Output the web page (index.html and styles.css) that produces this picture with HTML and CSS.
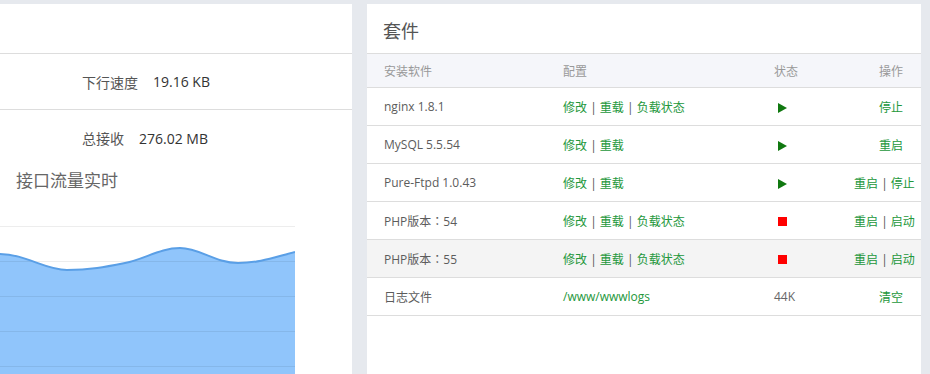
FILE: index.html
```html
<!DOCTYPE html>
<html lang="zh-CN">
<head>
<meta charset="utf-8">
<title>套件</title>
<link rel="stylesheet" href="styles.css">
</head>
<body>
<div class="page">
  <section class="panel panel-left">
    <div class="panel-head"></div>
    <div class="stat stat-first"><span class="stat-label">下行速度</span><span class="stat-value">19.16 KB</span></div>
    <div class="stat stat-second"><span class="stat-label">总接收</span><span class="stat-value">276.02 MB</span></div>
    <h3 class="chart-title">接口流量实时</h3>
    <svg class="chart" width="295" height="180" viewBox="0 0 295 180">
      <path class="area" d="M0,58 C25,58 45,74 67,74 C90,74 105,71 125,67 C145,63 160,52 180,52 C200,52 215,67 238,67 C260,67 275,61 295,56 L295,180 L0,180 Z"/>
      <g class="grid">
        <line x1="0" y1="30.5" x2="295" y2="30.5"/>
        <line x1="0" y1="65.5" x2="295" y2="65.5"/>
        <line x1="0" y1="100.5" x2="295" y2="100.5"/>
        <line x1="0" y1="135.5" x2="295" y2="135.5"/>
        <line x1="0" y1="170.5" x2="295" y2="170.5"/>
      </g>
      <path class="line" d="M0,58 C25,58 45,74 67,74 C90,74 105,71 125,67 C145,63 160,52 180,52 C200,52 215,67 238,67 C260,67 275,61 295,56"/>
    </svg>
  </section>
  <section class="panel panel-right">
    <div class="panel-head"><h2 class="panel-title">套件</h2></div>
    <table class="soft">
      <colgroup><col class="c1"><col class="c2"><col class="c3"><col class="c4"></colgroup>
      <thead>
        <tr><th>安装软件</th><th>配置</th><th>状态</th><th class="r">操作</th></tr>
      </thead>
      <tbody>
        <tr><td>nginx 1.8.1</td><td><a>修改</a> | <a>重载</a> | <a>负载状态</a></td><td><span class="run"></span></td><td class="r"><a>停止</a></td></tr>
        <tr><td>MySQL 5.5.54</td><td><a>修改</a> | <a>重载</a></td><td><span class="run"></span></td><td class="r"><a>重启</a></td></tr>
        <tr><td>Pure-Ftpd 1.0.43</td><td><a>修改</a> | <a>重载</a></td><td><span class="run"></span></td><td class="r"><a>重启</a> | <a>停止</a></td></tr>
        <tr><td>PHP版本<span class="colon" lang="zh-TW">：</span>54</td><td><a>修改</a> | <a>重载</a> | <a>负载状态</a></td><td><span class="stop"></span></td><td class="r"><a>重启</a> | <a>启动</a></td></tr>
        <tr class="hover"><td>PHP版本<span class="colon" lang="zh-TW">：</span>55</td><td><a>修改</a> | <a>重载</a> | <a>负载状态</a></td><td><span class="stop"></span></td><td class="r"><a>重启</a> | <a>启动</a></td></tr>
        <tr><td>日志文件</td><td><a>/www/wwwlogs</a></td><td>44K</td><td class="r"><a>清空</a></td></tr>
      </tbody>
    </table>
  </section>
</div>
</body>
</html>
```

FILE: styles.css
```css
html, body {
  margin: 0;
  padding: 0;
  background: #e6e9ee;
  font-family: "Open Sans", "Noto Sans CJK SC", sans-serif;
}
.page {
  display: flex;
  align-items: flex-start;
  padding-top: 4px;
  height: 370px;
  overflow: hidden;
}
.panel {
  background: #fff;
  height: 400px;
}
.panel-left {
  width: 352px;
}
.panel-right {
  width: 554px;
  margin-left: 15px;
}
.panel-head {
  height: 49px;
  border-bottom: 1px solid #ddd;
  display: flex;
  align-items: center;
}
.panel-title {
  margin: 0;
  padding-left: 16px;
  font-size: 18px;
  font-weight: normal;
  color: #555;
  line-height: 1;
  position: relative;
  top: 2px;
}
.stat {
  display: flex;
  align-items: center;
  padding-left: 82px;
  font-size: 14px;
}
.stat-first {
  height: 55px;
  border-bottom: 1px solid #ddd;
}
.stat-second {
  height: 56px;
}
.stat-label {
  color: #555;
  margin-right: 15px;
}
.stat-value {
  color: #333;
}
.chart-title {
  margin: 0;
  height: 30px;
  line-height: 30px;
  padding-left: 16px;
  font-size: 17px;
  font-weight: normal;
  color: #666;
}
.chart {
  display: block;
}
.chart .area {
  fill: #90c5fb;
}
.chart .grid line {
  stroke: #000;
  stroke-opacity: 0.07;
  stroke-width: 1;
}
.chart .line {
  fill: none;
  stroke: #5a9fe6;
  stroke-width: 2;
}
.soft {
  width: 100%;
  border-collapse: collapse;
  table-layout: fixed;
  font-size: 12px;
}
.soft .c1 { width: 180px; }
.soft .c2 { width: 211px; }
.soft .c3 { width: 80px; }
.soft .c4 { width: 83px; }
.soft th {
  height: 33px;
  background: #f5f6fa;
  color: #999;
  font-weight: normal;
  text-align: left;
  padding: 0 16px;
  border-bottom: 1px solid #ddd;
}
.soft th:first-child, .soft td:first-child {
  padding-left: 17px;
}
.soft td {
  height: 37px;
  padding: 0 16px;
  color: #666;
  border-bottom: 1px solid #ddd;
  white-space: nowrap;
}
.soft td:first-child {
  color: #5c5c5c;
}
.soft .colon {
  font-family: "Noto Sans CJK TC", sans-serif;
}
.soft .r {
  text-align: right;
  padding-right: 18px;
}
.soft tr.hover td {
  background: #f4f4f4;
}
.soft a {
  color: #23973b;
}
.soft td:nth-child(2), .soft td:nth-child(4) {
  color: #555;
}
.run {
  display: inline-block;
  width: 0;
  height: 0;
  margin-left: 4px;
  border-top: 5px solid transparent;
  border-bottom: 5px solid transparent;
  border-left: 9px solid #107810;
  vertical-align: middle;
}
.stop {
  display: inline-block;
  width: 9px;
  height: 9px;
  margin-left: 4px;
  background: #f00;
  vertical-align: middle;
}
```
